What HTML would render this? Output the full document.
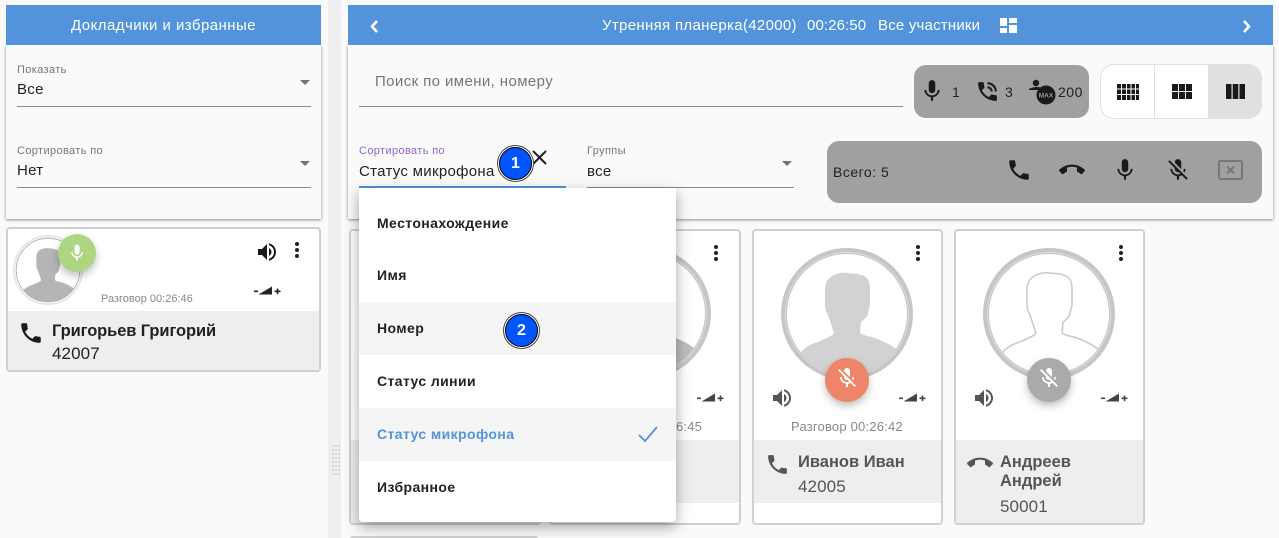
<!DOCTYPE html>
<html lang="ru"><head><meta charset="utf-8"><title>Конференция</title>
<style>
html,body{margin:0;padding:0;width:1279px;height:538px;overflow:hidden;background:#fafafa;font-family:"Liberation Sans","Noto Sans CJK SC",sans-serif;color:#222}
.wrap{position:relative;width:1279px;height:538px;overflow:hidden;background:#fafafa}
.a{position:absolute}
.t{position:absolute;white-space:nowrap;line-height:20px}
svg{position:absolute;display:block;overflow:visible}
.hd{background:#5293db;color:#fff}
.panel{background:#fafafa;box-shadow:0 1px 3px rgba(0,0,0,.45)}
.lbl{font-size:11px;color:#757575;letter-spacing:.37px}
.val{font-size:15px;color:#222;letter-spacing:.3px}
.line{position:absolute;height:1px;background:#8a8a8a}
.arr{position:absolute;width:0;height:0;border-left:5.5px solid transparent;border-right:5.5px solid transparent;border-top:5.5px solid #757575}
.card{position:absolute;background:#fff;border:2px solid #d0d0d0;border-radius:4px;box-sizing:border-box}
.gray{position:absolute;background:#eee}
.nm{font-size:16.5px;font-weight:bold;color:#555;position:absolute;white-space:nowrap;line-height:20px}
.no{font-size:17px;letter-spacing:.1px;color:#555;position:absolute;white-space:nowrap;line-height:20px}
.sm{font-size:11px;color:#888;position:absolute;white-space:nowrap;line-height:14px}
.sm.b{font-size:13px;letter-spacing:.2px}
.mi{position:absolute;left:359px;width:317px;height:53px}
.mi span{position:absolute;left:18px;top:16px;font-size:14px;letter-spacing:.4px;font-weight:bold;line-height:20px;color:#222;white-space:nowrap}
.badge{position:absolute;width:31px;height:31px;border-radius:50%;background:#0055ff;border:1px solid #000;box-shadow:0 0 0 1px #fff,0 0 0 2px #444;color:#fff;font-weight:bold;font-size:16px;line-height:32px;text-align:center}
.fab{position:absolute;border-radius:50%;box-shadow:0 4px 8px rgba(0,0,0,.25)}
.cnt{font-size:14px;letter-spacing:.5px;color:#222}
.ttl{font-size:15px;color:#fff}
</style></head><body>
<div class="wrap">

<svg width="0" height="0" style="position:absolute">
<defs>
<path id="ph" d="M6.62 10.79c1.44 2.83 3.76 5.14 6.59 6.59l2.2-2.2c.27-.27.67-.36 1.02-.24 1.12.37 2.33.57 3.57.57.55 0 1 .45 1 1V20c0 .55-.45 1-1 1-9.39 0-17-7.61-17-17 0-.55.45-1 1-1h3.5c.55 0 1 .45 1 1 0 1.25.2 2.45.57 3.57.11.35.03.74-.25 1.02l-2.2 2.2z"/>
<path id="end" d="M12 9c-1.6 0-3.15.25-4.6.72v3.1c0 .39-.23.74-.56.9-.98.49-1.87 1.12-2.66 1.85-.18.18-.43.28-.7.28-.28 0-.53-.11-.71-.29L.29 13.08c-.18-.17-.29-.42-.29-.7 0-.28.11-.53.29-.71C3.34 8.78 7.46 7 12 7s8.66 1.78 11.71 4.67c.18.18.29.43.29.71 0 .28-.11.53-.29.71l-2.48 2.48c-.18.18-.43.29-.71.29-.27 0-.52-.11-.7-.28-.79-.74-1.69-1.36-2.67-1.85-.33-.16-.56-.5-.56-.9v-3.1C15.15 9.25 13.6 9 12 9z"/>
<path id="mic" d="M12 14c1.66 0 2.99-1.34 2.99-3L15 5c0-1.66-1.34-3-3-3S9 3.34 9 5v6c0 1.66 1.34 3 3 3zm5.3-3c0 3-2.54 5.1-5.3 5.1S6.7 14 6.7 11H5c0 3.41 2.72 6.23 6 6.72V21h2v-3.28c3.28-.48 6-3.3 6-6.72h-1.7z"/>
<path id="moff" d="M19 11h-1.7c0 .74-.16 1.43-.43 2.05l1.23 1.23c.56-.98.9-2.09.9-3.28zm-4.02.17c0-.06.02-.11.02-.17V5c0-1.66-1.34-3-3-3S9 3.34 9 5v.18l5.98 5.99zM4.27 3L3 4.27l6.01 6.01V11c0 1.66 1.33 3 2.99 3 .22 0 .44-.03.65-.08l1.66 1.66c-.71.33-1.5.52-2.31.52-2.76 0-5.3-2.1-5.3-5.1H5c0 3.41 2.72 6.23 6 6.72V21h2v-3.28c.91-.13 1.77-.45 2.54-.9L19.73 21 21 19.73 4.27 3z"/>
<path id="vol" d="M3 9v6h4l5 5V4L7 9H3zm13.5 3c0-1.77-1.02-3.29-2.5-4.03v8.05c1.48-.73 2.5-2.25 2.5-4.02zM14 3.23v2.06c2.89.86 5 3.54 5 6.71s-2.11 5.85-5 6.71v2.06c4.01-.91 7-4.49 7-8.77s-2.99-7.86-7-8.77z"/>
<path id="tlk" d="M20 15.5c-1.25 0-2.45-.2-3.57-.57-.35-.11-.74-.03-1.02.24l-2.2 2.2c-2.83-1.44-5.15-3.75-6.59-6.58l2.2-2.21c.28-.27.36-.66.25-1.01C8.7 6.45 8.5 5.25 8.5 4c0-.55-.45-1-1-1H4c-.55 0-1 .45-1 1 0 9.39 7.61 17 17 17 .55 0 1-.45 1-1v-3.5c0-.55-.45-1-1-1zM19 12h2c0-4.97-4.03-9-9-9v2c3.87 0 7 3.13 7 7zm-4 0h2c0-2.76-2.24-5-5-5v2c1.66 0 3 1.34 3 3z"/>
<path id="man" d="M67 25C58 24 50 27 46 33C44 37 44 40 44 44L44 57C44 62 46 65 47 67L50 76L53 85C50 89 43 91 37 94C30 96 24 99 20 104L20 132L116 132L115 101C110 97 102 93 94 90C88 88 83 88 79 85L80 74C84 71 87 68 87 65L89 57L89 40C89 33 86 28 80 27C76 25 72 26 67 25Z"/>
<clipPath id="cc"><circle cx="66" cy="66" r="60"/></clipPath>
<g id="sig"><rect x="0" y="4.500" width="4" height="1.600"/><path d="M4.500 8.500L18 .5V8.500Z"/><path d="M22.700 2.500h1.600v2H26.500v1.600h-2.200v2h-1.600v-2H20.500V4.500h2.200z"/></g>
<g id="dots"><circle cx="2" cy="2" r="2"/><circle cx="2" cy="8" r="2"/><circle cx="2" cy="14" r="2"/></g>
</defs>
</svg>

<!-- divider -->
<div class="a" style="left:328px;top:0;width:13px;height:538px;background:#efefef"></div>
<svg style="left:332px;top:445px" width="8" height="34"><g fill="#d8d8d8"><path d="M0 0h2v2H0zM3 0h2v2H3zM6 0h2v2H6zM0 4h2v2H0zM3 4h2v2H3zM6 4h2v2H6zM0 8h2v2H0zM3 8h2v2H3zM6 8h2v2H6zM0 12h2v2H0zM3 12h2v2H3zM6 12h2v2H6zM0 16h2v2H0zM3 16h2v2H3zM6 16h2v2H6zM0 20h2v2H0zM3 20h2v2H3zM6 20h2v2H6zM0 24h2v2H0zM3 24h2v2H3zM6 24h2v2H6zM0 28h2v2H0zM3 28h2v2H3zM6 28h2v2H6z"/></g></svg>

<!-- left panel -->
<div class="a panel" style="left:6px;top:45px;width:315px;height:174px"></div>
<div class="a hd" style="left:6px;top:5px;width:315px;height:40px"></div>
<div class="t" style="left:71px;top:16px;font-size:15px;letter-spacing:.45px;color:#fff">Докладчики и избранные</div>
<div class="t lbl" style="left:17px;top:60px">Показать</div>
<div class="t val" style="left:17px;top:80px">Все</div>
<div class="arr" style="left:300px;top:80px"></div>
<div class="line" style="left:17px;top:106px;width:294px"></div>
<div class="t lbl" style="left:17px;top:141px">Сортировать по</div>
<div class="t val" style="left:17px;top:161px">Нет</div>
<div class="arr" style="left:300px;top:161px"></div>
<div class="line" style="left:17px;top:187px;width:294px"></div>

<!-- left card -->
<div class="card" style="left:6px;top:227px;width:315px;height:145px"></div>
<div class="gray" style="left:8px;top:311px;width:311px;height:59px"></div>
<svg style="left:13px;top:235px" width="70" height="70" viewBox="0 0 132 132"><circle cx="66" cy="66" r="64" fill="#fff" stroke="#e8e8e8" stroke-width="4"/><use href="#man" fill="#b5b5b5" clip-path="url(#cc)"/><circle cx="66" cy="66" r="60" fill="none" stroke="#aaa" stroke-width="1.500"/></svg>
<div class="fab" style="left:58px;top:234px;width:38px;height:38px;background:#aed581"></div>
<svg style="left:67px;top:243px" width="20" height="20" viewBox="0 0 24 24" fill="#fff"><use href="#mic"/></svg>
<svg style="left:255px;top:240px" width="24" height="24" viewBox="0 0 24 24" fill="#1a1a1a"><use href="#vol"/></svg>
<svg style="left:295px;top:242px" width="4" height="16" fill="#222"><use href="#dots"/></svg>
<svg style="left:254px;top:286px" width="27" height="10" viewBox="0 0 27 10" fill="#222"><use href="#sig"/></svg>
<div class="sm" style="left:101px;top:292px">Разговор 00:26:46</div>
<svg style="left:18px;top:320px" width="26" height="26" viewBox="0 0 24 24" fill="#1a1a1a"><use href="#ph"/></svg>
<div class="nm" style="left:52px;top:321px;color:#222;letter-spacing:-.1px">Григорьев Григорий</div>
<div class="no" style="left:52px;top:344px;color:#222">42007</div>

<!-- main header & panel -->
<div class="a panel" style="left:348px;top:45px;width:925px;height:174px"></div>
<div class="a hd" style="left:348px;top:5px;width:925px;height:40px"></div>
<svg style="left:369px;top:19px" width="10" height="15" viewBox="0 0 10 15"><path d="M8 2L3 7.500L8 13" fill="none" stroke="#fff" stroke-width="2.600"/></svg>
<svg style="left:1242px;top:19px" width="10" height="15" viewBox="0 0 10 15"><path d="M2 2L7 7.500L2 13" fill="none" stroke="#fff" stroke-width="2.600"/></svg>
<div class="t ttl" style="left:602px;top:16px;letter-spacing:.32px">Утренняя планерка(42000)</div>
<div class="t ttl" style="left:807px;top:16px;letter-spacing:.1px">00:26:50</div>
<div class="t ttl" style="left:878px;top:16px;letter-spacing:.2px">Все участники</div>
<svg style="left:1000px;top:18px" width="17" height="15" fill="#fff"><path d="M0 0h7v8H0zM9 0h8v5H9zM0 10h7v5H0zM9 7h8v8H9z"/></svg>

<div class="t" style="left:375px;top:72px;font-size:15px;letter-spacing:.4px;color:#757575">Поиск по имени, номеру</div>
<div class="line" style="left:359px;top:106px;width:544px"></div>

<div class="a" style="left:914px;top:65px;width:175px;height:53px;background:#a0a0a0;border-radius:12px"></div>
<svg style="left:919px;top:78px" width="26" height="26" viewBox="0 0 24 24" fill="#1a1a1a"><use href="#mic"/></svg>
<div class="t cnt" style="left:952px;top:82px">1</div>
<svg style="left:975px;top:79px" width="25" height="25" viewBox="0 0 24 24" fill="#1a1a1a"><use href="#tlk"/></svg>
<div class="t cnt" style="left:1005px;top:82px">3</div>
<svg style="left:1029px;top:79px" width="27" height="26" viewBox="0 0 27 26"><circle cx="7" cy="4" r="3.200" fill="#1a1a1a"/><path d="M0 10c2-1 5-2 8-2s4 1 5 2v1H0z" fill="#1a1a1a"/><circle cx="17" cy="16" r="9.500" fill="#1a1a1a"/><text x="17" y="18.500" text-anchor="middle" font-size="6.500" font-weight="bold" fill="#999" font-family="Liberation Sans">MAX</text></svg>
<div class="t cnt" style="left:1058px;top:82px">200</div>

<div class="a" style="left:1100px;top:64px;width:162px;height:55px;background:#fff;border:1px solid #e0e0e0;border-radius:14px;box-sizing:border-box;overflow:hidden"><div class="a" style="left:53px;top:0;width:1px;height:55px;background:#e0e0e0"></div><div class="a" style="left:107px;top:0;width:55px;height:55px;background:#e0e0e0"></div></div>
<svg style="left:1117px;top:84px" width="22" height="16" fill="#1a1a1a"><path d="M0 0h4v4.500H0zM5 0h4v4.500H5zM10 0h3.500v4.500H10zM14.500 0h3.500v4.500h-3.500zM19 0h3v4.500h-3zM0 5.500h4V10H0zM5 5.500h4V10H5zM10 5.500h3.500V10H10zM14.500 5.500h3.500V10h-3.500zM19 5.500h3V10h-3zM0 11h4v5H0zM5 11h4v5H5zM10 11h3.500v5H10zM14.500 11h3.500v5h-3.500zM19 11h3v5h-3z"/></svg>
<svg style="left:1172px;top:84px" width="20" height="15" fill="#1a1a1a"><path d="M0 0h6v7H0zM7 0h6v7H7zM14 0h6v7h-6zM0 8h6v7H0zM7 8h6v7H7zM14 8h6v7h-6z"/></svg>
<svg style="left:1226px;top:84px" width="19" height="15" fill="#1a1a1a"><path d="M0 0h5.500v15H0zM6.700 0h5.600v15H6.700zM13.500 0h5.500v15h-5.500z"/></svg>

<div class="t lbl" style="left:359px;top:141px;color:#8a63d2">Сортировать по</div>
<div class="t val" style="left:359px;top:162px">Статус микрофона</div>
<div class="a" style="left:359px;top:186px;width:207px;height:2px;background:#5293db"></div>
<svg style="left:532px;top:150px" width="15" height="15"><path d="M1 1L14 14M14 1L1 14" stroke="#222" stroke-width="2"/></svg>
<div class="t lbl" style="left:587px;top:141px">Группы</div>
<div class="t val" style="left:587px;top:162px">все</div>
<div class="arr" style="left:782px;top:161px"></div>
<div class="line" style="left:587px;top:187px;width:207px"></div>

<div class="a" style="left:827px;top:141px;width:435px;height:62px;background:#a0a0a0;border-radius:12px"></div>
<div class="t cnt" style="left:833px;top:162px">Всего: 5</div>
<svg style="left:1006px;top:157px" width="26" height="26" viewBox="0 0 24 24" fill="#1a1a1a"><use href="#ph"/></svg>
<svg style="left:1059px;top:157px" width="26" height="26" viewBox="0 0 24 24" fill="#1a1a1a"><use href="#end"/></svg>
<svg style="left:1112px;top:157px" width="26" height="26" viewBox="0 0 24 24" fill="#1a1a1a"><use href="#mic"/></svg>
<svg style="left:1165px;top:157px" width="26" height="26" viewBox="0 0 24 24" fill="#1a1a1a"><use href="#moff"/></svg>
<svg style="left:1218px;top:160px" width="25" height="20"><rect x="1" y="1" width="23" height="18" rx="1.500" fill="none" stroke="#777" stroke-width="2"/><path d="M9 6.500L16 13.500M16 6.500L9 13.500" stroke="#777" stroke-width="2"/></svg>

<!-- grid cards -->
<div class="card" style="left:349px;top:229px;width:192px;height:296px"></div>
<div class="gray" style="left:351px;top:440px;width:188px;height:83px"></div>
<div class="card" style="left:349px;top:536px;width:190px;height:20px"></div>

<div class="card" style="left:549px;top:229px;width:192px;height:296px"></div>
<div class="gray" style="left:551px;top:440px;width:188px;height:63px"></div>
<svg style="left:579px;top:247px" width="132" height="132" viewBox="0 0 132 132"><circle cx="66" cy="66" r="63" fill="#fff" stroke="#c6c6c6" stroke-width="6"/><circle cx="66" cy="66" r="61.500" fill="none" stroke="#e4e4e4" stroke-width=".7"/><use href="#man" fill="#bdbdbd" clip-path="url(#cc)"/></svg>
<svg style="left:714px;top:245px" width="4" height="16" fill="#222"><use href="#dots"/></svg>
<svg style="left:697px;top:393px" width="27" height="10" viewBox="0 0 27 10" fill="#444"><use href="#sig"/></svg>
<div class="sm b" style="left:676px;top:420px">6:45</div>

<div class="card" style="left:752px;top:229px;width:191px;height:296px"></div>
<div class="gray" style="left:754px;top:440px;width:187px;height:63px"></div>
<svg style="left:781px;top:248px" width="132" height="132" viewBox="0 0 132 132"><circle cx="66" cy="66" r="63" fill="#fff" stroke="#c6c6c6" stroke-width="6"/><circle cx="66" cy="66" r="61.500" fill="none" stroke="#e4e4e4" stroke-width=".7"/><use href="#man" fill="#d2d2d2" clip-path="url(#cc)"/></svg>
<svg style="left:916px;top:245px" width="4" height="16" fill="#222"><use href="#dots"/></svg>
<div class="fab" style="left:825px;top:358px;width:44px;height:44px;background:#ee8468"></div>
<svg style="left:835px;top:366px" width="24" height="24" viewBox="0 0 24 24" fill="#fff"><use href="#moff"/></svg>
<svg style="left:770px;top:386px" width="24" height="24" viewBox="0 0 24 24" fill="#555"><use href="#vol"/></svg>
<svg style="left:899px;top:393px" width="27" height="10" viewBox="0 0 27 10" fill="#444"><use href="#sig"/></svg>
<div class="sm b" style="left:791px;top:420px">Разговор 00:26:42</div>
<svg style="left:765px;top:452px" width="25" height="25" viewBox="0 0 24 24" fill="#555"><use href="#ph"/></svg>
<div class="nm" style="left:798px;top:452px">Иванов Иван</div>
<div class="no" style="left:798px;top:477px">42005</div>

<div class="card" style="left:954px;top:229px;width:191px;height:296px"></div>
<div class="gray" style="left:956px;top:440px;width:187px;height:83px"></div>
<svg style="left:983px;top:248px" width="132" height="132" viewBox="0 0 132 132"><circle cx="66" cy="66" r="63" fill="#fff" stroke="#c6c6c6" stroke-width="6"/><circle cx="66" cy="66" r="61.500" fill="none" stroke="#e4e4e4" stroke-width=".7"/><use href="#man" fill="#fff" stroke="#c8c8c8" stroke-width="1.500" clip-path="url(#cc)"/></svg>
<svg style="left:1119px;top:245px" width="4" height="16" fill="#222"><use href="#dots"/></svg>
<div class="fab" style="left:1027px;top:358px;width:44px;height:44px;background:#aaa"></div>
<svg style="left:1037px;top:366px" width="24" height="24" viewBox="0 0 24 24" fill="#fff"><use href="#moff"/></svg>
<svg style="left:972px;top:386px" width="24" height="24" viewBox="0 0 24 24" fill="#555"><use href="#vol"/></svg>
<svg style="left:1101px;top:393px" width="27" height="10" viewBox="0 0 27 10" fill="#444"><use href="#sig"/></svg>
<svg style="left:967px;top:450px" width="26" height="26" viewBox="0 0 24 24" fill="#555"><use href="#end"/></svg>
<div class="nm" style="left:1000px;top:452px">Андреев</div>
<div class="nm" style="left:1000px;top:471px">Андрей</div>
<div class="no" style="left:1000px;top:497px">50001</div>

<!-- dropdown -->
<div class="a" style="left:359px;top:188px;width:317px;height:334px;background:#fff;border-radius:0 0 4px 4px;box-shadow:0 5px 14px rgba(0,0,0,.35)"></div>
<div class="mi" style="top:197px"><span>Местонахождение</span></div>
<div class="mi" style="top:249px"><span>Имя</span></div>
<div class="mi" style="top:302px;background:#f5f5f5"><span>Номер</span></div>
<div class="mi" style="top:355px"><span>Статус линии</span></div>
<div class="mi" style="top:408px;background:#f5f5f5"><span style="color:#5293db">Статус микрофона</span></div>
<svg style="left:638px;top:426px" width="20" height="17"><path d="M1 9L7 15L19 1" fill="none" stroke="#5293db" stroke-width="1.800"/></svg>
<div class="mi" style="top:461px"><span>Избранное</span></div>

<div class="badge" style="left:499px;top:147px">1</div>
<div class="badge" style="left:505px;top:314px">2</div>

</div>
</body></html>
